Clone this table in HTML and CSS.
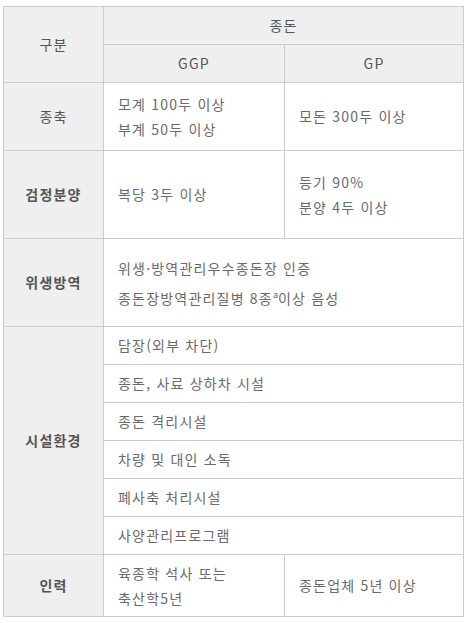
FILE: index.html
```html
<!DOCTYPE html>
<html lang="ko">
<head>
<meta charset="utf-8">
<link rel="stylesheet" href="styles.css">
</head>
<body>
<table class="spec">
  <colgroup>
    <col class="c1"><col class="c2"><col class="c3">
  </colgroup>
  <tr class="h38">
    <th rowspan="2" class="head">구분</th>
    <th colspan="2" class="head">종돈</th>
  </tr>
  <tr class="h38">
    <th class="head">GGP</th>
    <th class="head">GP</th>
  </tr>
  <tr class="h68">
    <th class="label light">종축</th>
    <td><div>모계 100두 이상</div><div>부계 50두 이상</div></td>
    <td>모돈 300두 이상</td>
  </tr>
  <tr class="h88">
    <th class="label">검정분양</th>
    <td>복당 3두 이상</td>
    <td><div>등기 90%</div><div>분양 4두 이상</div></td>
  </tr>
  <tr class="h88">
    <th class="label">위생방역</th>
    <td colspan="2"><div class="tall">위생·방역관리우수종돈장 인증</div><div class="tall">종돈장방역관리질병 8종<sup>a</sup>이상 음성</div></td>
  </tr>
  <tr class="h38">
    <th rowspan="6" class="label">시설환경</th>
    <td colspan="2">담장(외부 차단)</td>
  </tr>
  <tr class="h38"><td colspan="2">종돈, 사료 상하차 시설</td></tr>
  <tr class="h38"><td colspan="2">종돈 격리시설</td></tr>
  <tr class="h38"><td colspan="2">차량 및 대인 소독</td></tr>
  <tr class="h38"><td colspan="2">폐사축 처리시설</td></tr>
  <tr class="h38"><td colspan="2">사양관리프로그램</td></tr>
  <tr class="h62">
    <th class="label">인력</th>
    <td><div>육종학 석사 또는</div><div>축산학5년</div></td>
    <td>종돈업체 5년 이상</td>
  </tr>
</table>
</body>
</html>
```
FILE: styles.css
```css
html, body {
  margin: 0;
  padding: 0;
  background: #ffffff;
}
body {
  padding: 6px 0 0 3px;
  font-family: "Noto Sans CJK KR", "Noto Sans", sans-serif;
  font-size: 14px;
  color: #6a6a6a;
}
.spec {
  border-collapse: collapse;
  table-layout: fixed;
  width: 460px;
}
.c1 { width: 100px; }
.c2 { width: 181px; }
.c3 { width: 179px; }
.spec th, .spec td {
  border: 1px solid #cccccc;
  padding: 0 0 0 14px;
  vertical-align: middle;
  line-height: 25px;
  letter-spacing: 1.2px;
  text-align: left;
}
.spec th {
  background: #efefef;
  text-align: center;
  padding: 0;
  color: #555555;
}
.head {
  font-weight: normal;
  color: #555555;
}
.label {
  font-weight: bold;
  color: #5a5a5a;
}
.label.light {
  font-weight: normal;
}
.h38 { height: 38px; }
.h62 { height: 62px; }
.h68 { height: 68px; }
.h88 { height: 88px; }
.tall {
  line-height: 30px;
}
sup {
  font-size: 9px;
  line-height: 0;
  letter-spacing: 0;
}
```
